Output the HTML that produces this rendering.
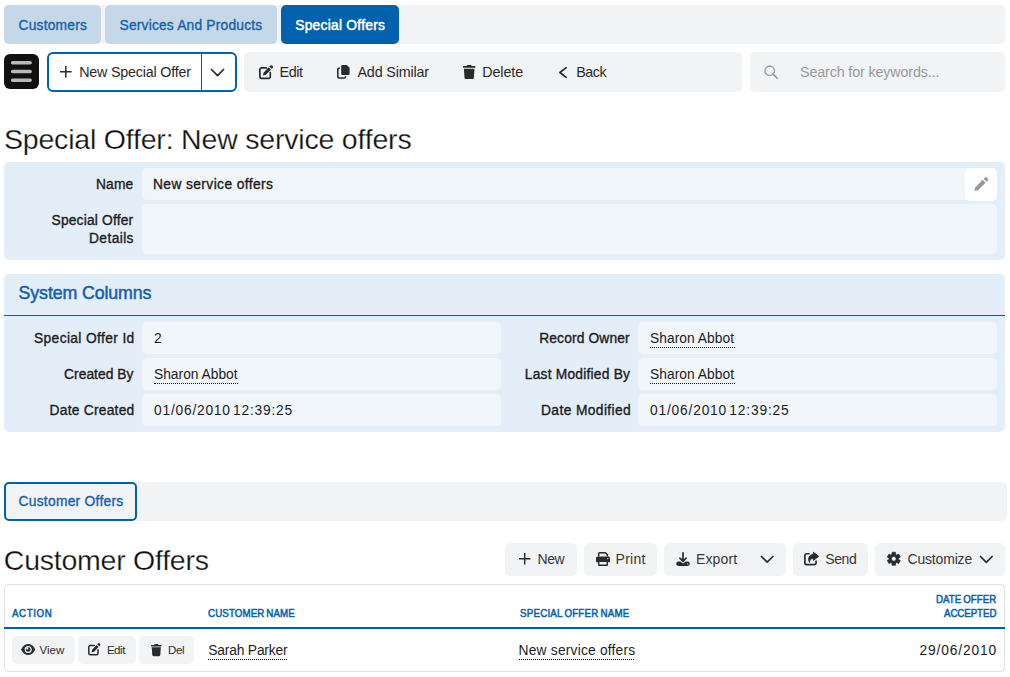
<!DOCTYPE html>
<html lang="en"><head><meta charset="utf-8"><title>Special Offer: New service offers</title>
<style>
html,body{margin:0;padding:0;background:#fff;}
body{width:1010px;height:677px;position:relative;overflow:hidden;font-family:"Liberation Sans", sans-serif;}
.b{position:absolute;}
.t{position:absolute;white-space:pre;margin:0;padding:0;text-decoration:none;display:block;}
svg{position:absolute;overflow:visible;}
</style></head><body>
<nav class="tabs">
<div class="b" style="left:4px;top:5px;width:1001px;height:39px;background:#f2f3f5;border-radius:5px;"></div>
<div class="b" style="left:4px;top:5px;width:97px;height:39px;background:#c5d8e8;border-radius:5px;"></div>
<div class="b" style="left:105px;top:5px;width:172px;height:39px;background:#c5d8e8;border-radius:5px;"></div>
<div class="b" style="left:281px;top:5px;width:118px;height:39px;background:#0061ae;border-radius:5px;"></div>
<a class="t" style="left:18.5px;top:18px;font-size:13.8px;line-height:15px;font-weight:400;color:#1660ad;letter-spacing:0.212px;-webkit-text-stroke:0.35px currentColor;">Customers</a>
<a class="t" style="left:119.5px;top:18px;font-size:13.8px;line-height:15px;font-weight:400;color:#1660ad;letter-spacing:0.192px;-webkit-text-stroke:0.35px currentColor;">Services And Products</a>
<a class="t" style="left:295.2px;top:18px;font-size:13.8px;line-height:15px;font-weight:400;color:#ffffff;letter-spacing:0.262px;-webkit-text-stroke:0.5px currentColor;">Special Offers</a>
</nav>
<div class="toolbar">
<div class="b" style="left:4px;top:54px;width:35px;height:35px;background:#111111;border-radius:6px;"></div>
<svg style="left:4px;top:54px" width="35" height="35" viewBox="0 0 35 35"><path d="M8.6 8.8H26.2M8.6 17.5H26.2M8.6 26.3H26.2" stroke="#b9b9b9" stroke-width="3.4" stroke-linecap="round" fill="none"/></svg>
<div class="b" style="left:47px;top:52px;width:190px;height:40px;background:#ffffff;border-radius:6px;border:2px solid #0061ae;box-sizing:border-box;"></div>
<div class="b" style="left:201px;top:54px;width:1px;height:36px;background:#0061ae;"></div>
<svg style="left:60.2px;top:66.2px" width="11.6" height="11.6" viewBox="0 0 11.6 11.6"><path d="M5.8 0V11.6M0 5.8H11.6" stroke="#2b2b2b" stroke-width="1.5" fill="none"/></svg>
<svg style="left:210.9px;top:68.86300000000001px" width="13.099999999999994" height="7.073999999999997" viewBox="0 0 13.099999999999994 7.073999999999997"><path d="M0.5 0.5L6.549999999999997 6.573999999999997L12.599999999999994 0.5" stroke="#2b2b2b" stroke-width="1.7" fill="none" stroke-linecap="round" stroke-linejoin="round"/></svg>
<div class="b" style="left:244px;top:52px;width:498px;height:40px;background:#f2f3f5;border-radius:5px;"></div>
<svg style="left:259.3px;top:64.6px" width="14" height="14" viewBox="0 0 14 14"><g transform="scale(1.0)"><path d="M7.2 2.9H2.6A1.7 1.7 0 0 0 0.9 4.6V11.6A1.7 1.7 0 0 0 2.6 13.3H9.6A1.7 1.7 0 0 0 11.3 11.6V7.6" stroke="#2b2b2b" stroke-width="1.7" fill="none" stroke-linecap="round"/><path d="M11.3 0.6a1.3 1.3 0 0 1 1.85 0l0.5 0.5a1.3 1.3 0 0 1 0 1.85l-0.9 0.9-2.35-2.35zM9.6 2.3l2.35 2.35-5.1 5.1-2.9 0.75 0.75-2.9z" fill="#2b2b2b"/></g></svg>
<svg style="left:337.4px;top:64.8px" width="12.8" height="13.6" viewBox="0 0 12.8 13.6"><g transform="scale(1.0,0.9927007299270073) translate(-0.2,-0.3)"><path d="M5.6 0.3H10l2.8 2.8V9.2a1.2 1.2 0 0 1-1.2 1.2H5.6A1.2 1.2 0 0 1 4.4 9.2V1.5A1.2 1.2 0 0 1 5.6 0.3z" fill="#2b2b2b"/><path d="M3 3.6H2.2A1.2 1.2 0 0 0 1 4.8v7.4a1.2 1.2 0 0 0 1.2 1.2h5.2a1.2 1.2 0 0 0 1.2-1.2v-0.6" stroke="#2b2b2b" stroke-width="1.6" fill="none"/></g></svg>
<svg style="left:462.9px;top:64.8px" width="12.4" height="14" viewBox="0 0 12.4 14"><g transform="scale(1.0,1.0)"><path d="M4.3 0h3.8l0.7 1.1h3a0.6 0.6 0 0 1 0.6 0.6v0.5a0.6 0.6 0 0 1-0.6 0.6H0.6A0.6 0.6 0 0 1 0 2.2V1.7a0.6 0.6 0 0 1 0.6-0.6h3z" fill="#2b2b2b"/><path d="M0.9 3.7h10.6l-0.6 9a1.4 1.4 0 0 1-1.4 1.3H2.9a1.4 1.4 0 0 1-1.4-1.3z" fill="#2b2b2b"/></g></svg>
<svg style="left:558.8px;top:66.76999999999994px" width="7.900000000000091" height="11.060000000000127" viewBox="0 0 7.900000000000091 11.060000000000127"><path d="M7.200000000000091 0.7L0.9 5.530000000000063L7.200000000000091 10.360000000000127" stroke="#2b2b2b" stroke-width="1.7" fill="none" stroke-linecap="round" stroke-linejoin="round"/></svg>
<div class="b" style="left:750px;top:52px;width:255px;height:40px;background:#f2f3f5;border-radius:5px;"></div>
<svg style="left:763.8px;top:64.8px" width="14" height="14" viewBox="0 0 14 14"><g transform="scale(1.0)"><circle cx="5.7" cy="5.7" r="4.7" stroke="#9b9ba0" stroke-width="1.35" fill="none"/><path d="M9.1 9.1L13.3 13.3" stroke="#9b9ba0" stroke-width="1.6" stroke-linecap="round"/></g></svg>
<a class="t" style="left:79.2px;top:64px;font-size:14.3px;line-height:16px;font-weight:400;color:#2a2a2a;letter-spacing:-0.193px;">New Special Offer</a>
<a class="t" style="left:279.5px;top:64px;font-size:14.3px;line-height:16px;font-weight:400;color:#2a2a2a;letter-spacing:-0.388px;">Edit</a>
<a class="t" style="left:357.5px;top:64px;font-size:14.3px;line-height:16px;font-weight:400;color:#2a2a2a;letter-spacing:-0.164px;">Add Similar</a>
<a class="t" style="left:482.2px;top:64px;font-size:14.3px;line-height:16px;font-weight:400;color:#2a2a2a;letter-spacing:-0.075px;">Delete</a>
<a class="t" style="left:576.2px;top:64px;font-size:14.3px;line-height:16px;font-weight:400;color:#2a2a2a;letter-spacing:-0.479px;">Back</a>
<span class="t" style="left:800px;top:64px;font-size:14.3px;line-height:16px;font-weight:400;color:#9a9a9a;letter-spacing:-0.131px;">Search for keywords...</span>
</div>
<header class="title">
<h1 class="t thin" style="left:4px;top:123px;font-size:28.5px;line-height:32px;font-weight:400;color:#101010;letter-spacing:-0.197px;-webkit-text-stroke:0.25px #fff;">Special Offer: New service offers</h1>
</header>
<section class="panel">
<div class="b" style="left:4px;top:162px;width:1001px;height:98px;background:#e4eef8;border-radius:5px;"></div>
<div class="b" style="left:142px;top:168px;width:855px;height:32px;background:#f1f6fb;border-radius:5px;"></div>
<div class="b" style="left:142px;top:204px;width:855px;height:50px;background:#f1f6fb;border-radius:5px;"></div>
<div class="b" style="left:965px;top:168px;width:32px;height:33px;background:#ffffff;border-radius:5px;"></div>
<svg style="left:973.8px;top:176.6px" width="14.4" height="14.4" viewBox="0 0 14.4 14.4"><g transform="scale(1.0285714285714287)"><path d="M10.6 0.6a1.4 1.4 0 0 1 2 0l0.8 0.8a1.4 1.4 0 0 1 0 2l-1.2 1.2-2.8-2.8zM8.5 2.7l2.8 2.8-7.4 7.4-3.6 0.8 0.8-3.6z" fill="#999999"/></g></svg>
<label class="t" style="left:96px;top:177px;font-size:13.8px;line-height:15px;font-weight:400;color:#1c1c1c;letter-spacing:0.157px;-webkit-text-stroke:0.35px currentColor;">Name</label>
<span class="t" style="left:153px;top:177px;font-size:13.8px;line-height:15px;font-weight:400;color:#1c1c1c;letter-spacing:0.393px;-webkit-text-stroke:0.35px currentColor;">New service offers</span>
<label class="t" style="left:51.5px;top:213px;font-size:13.8px;line-height:15px;font-weight:400;color:#1c1c1c;letter-spacing:0.183px;-webkit-text-stroke:0.35px currentColor;">Special Offer</label>
<label class="t" style="left:89px;top:231px;font-size:13.8px;line-height:15px;font-weight:400;color:#1c1c1c;letter-spacing:0.388px;-webkit-text-stroke:0.35px currentColor;">Details</label>
</section>
<section class="panel system">
<div class="b" style="left:4px;top:274px;width:1001px;height:158px;background:#e4eef8;border-radius:5px;"></div>
<div class="b" style="left:4px;top:315px;width:1001px;height:1px;background:#0061ae;"></div>
<div class="b" style="left:142px;top:322px;width:359px;height:32px;background:#f1f6fb;border-radius:5px;"></div>
<div class="b" style="left:638px;top:322px;width:359px;height:32px;background:#f1f6fb;border-radius:5px;"></div>
<div class="b" style="left:142px;top:358px;width:359px;height:32px;background:#f1f6fb;border-radius:5px;"></div>
<div class="b" style="left:638px;top:358px;width:359px;height:32px;background:#f1f6fb;border-radius:5px;"></div>
<div class="b" style="left:142px;top:394px;width:359px;height:32px;background:#f1f6fb;border-radius:5px;"></div>
<div class="b" style="left:638px;top:394px;width:359px;height:32px;background:#f1f6fb;border-radius:5px;"></div>
<div class="b" style="left:153.5px;top:383px;width:84.80000000000001px;height:0;border-top:1px dotted #161616"></div>
<div class="b" style="left:650px;top:347px;width:84.79999999999995px;height:0;border-top:1px dotted #161616"></div>
<div class="b" style="left:650px;top:383px;width:84.79999999999995px;height:0;border-top:1px dotted #161616"></div>
<h3 class="t" style="left:18.6px;top:283px;font-size:17.8px;line-height:20px;font-weight:400;color:#1660ad;letter-spacing:-0.115px;-webkit-text-stroke:0.5px currentColor;">System Columns</h3>
<label class="t" style="left:34px;top:331px;font-size:13.8px;line-height:15px;font-weight:400;color:#1c1c1c;letter-spacing:0.362px;-webkit-text-stroke:0.35px currentColor;">Special Offer Id</label>
<span class="t" style="left:154px;top:331px;font-size:13.8px;line-height:15px;font-weight:400;color:#1c1c1c;letter-spacing:0px;">2</span>
<label class="t" style="left:64px;top:367px;font-size:13.8px;line-height:15px;font-weight:400;color:#1c1c1c;letter-spacing:0.053px;-webkit-text-stroke:0.35px currentColor;">Created By</label>
<a class="t" style="left:154px;top:367px;font-size:13.8px;line-height:15px;font-weight:400;color:#1c1c1c;letter-spacing:-0.004px;">Sharon Abbot</a>
<label class="t" style="left:49.5px;top:403px;font-size:13.8px;line-height:15px;font-weight:400;color:#1c1c1c;letter-spacing:0.247px;-webkit-text-stroke:0.35px currentColor;">Date Created</label>
<span class="t" style="left:154px;top:403px;font-size:13.8px;line-height:15px;font-weight:400;color:#1c1c1c;letter-spacing:0.771px;word-spacing:-2.3px;">01/06/2010 12:39:25</span>
<label class="t" style="left:539.2px;top:331px;font-size:13.8px;line-height:15px;font-weight:400;color:#1c1c1c;letter-spacing:0.141px;-webkit-text-stroke:0.35px currentColor;">Record Owner</label>
<a class="t" style="left:650px;top:331px;font-size:13.8px;line-height:15px;font-weight:400;color:#1c1c1c;letter-spacing:0.041px;">Sharon Abbot</a>
<label class="t" style="left:524.8px;top:367px;font-size:13.8px;line-height:15px;font-weight:400;color:#1c1c1c;letter-spacing:0.214px;-webkit-text-stroke:0.35px currentColor;">Last Modified By</label>
<a class="t" style="left:650px;top:367px;font-size:13.8px;line-height:15px;font-weight:400;color:#1c1c1c;letter-spacing:0.041px;">Sharon Abbot</a>
<label class="t" style="left:541px;top:403px;font-size:13.8px;line-height:15px;font-weight:400;color:#1c1c1c;letter-spacing:0.387px;-webkit-text-stroke:0.35px currentColor;">Date Modified</label>
<span class="t" style="left:650px;top:403px;font-size:13.8px;line-height:15px;font-weight:400;color:#1c1c1c;letter-spacing:0.799px;word-spacing:-2.3px;">01/06/2010 12:39:25</span>
</section>
<nav class="subtabs">
<div class="b" style="left:4px;top:482px;width:1003px;height:39px;background:#f2f3f5;border-radius:5px;"></div>
<div class="b" style="left:4px;top:482px;width:133px;height:39px;background:#f2f3f5;border-radius:5px;border:2px solid #0061ae;box-sizing:border-box;"></div>
<a class="t" style="left:18.5px;top:494px;font-size:13.8px;line-height:15px;font-weight:400;color:#1660ad;letter-spacing:0.268px;-webkit-text-stroke:0.35px currentColor;">Customer Offers</a>
</nav>
<div class="list-head">
<div class="b" style="left:505px;top:543px;width:72px;height:33px;background:#f2f3f5;border-radius:5px;"></div>
<div class="b" style="left:584px;top:543px;width:73px;height:33px;background:#f2f3f5;border-radius:5px;"></div>
<div class="b" style="left:664px;top:543px;width:122px;height:33px;background:#f2f3f5;border-radius:5px;"></div>
<div class="b" style="left:793px;top:543px;width:75px;height:33px;background:#f2f3f5;border-radius:5px;"></div>
<div class="b" style="left:875px;top:543px;width:130px;height:33px;background:#f2f3f5;border-radius:5px;"></div>
<svg style="left:518.5px;top:553.3px" width="11.4" height="11.4" viewBox="0 0 11.4 11.4"><path d="M5.7 0V11.4M0 5.7H11.4" stroke="#2b2b2b" stroke-width="1.5" fill="none"/></svg>
<svg style="left:595.9px;top:551.9px" width="14.0" height="14.0" viewBox="0 0 14.0 14.0"><g transform="scale(1.0)"><path d="M2.7 4.6V1.6A0.9 0.9 0 0 1 3.6 0.700H9.4L11.3 2.500V4.600" stroke="#2b2b2b" stroke-width="1.5" fill="none" stroke-linejoin="round"/><path d="M1.5 4.5h11A1.5 1.5 0 0 1 14 6v3.6a0.700 0.700 0 0 1-0.700 0.700H0.700A0.700 0.700 0 0 1 0 9.600V6A1.500 1.500 0 0 1 1.500 4.500z" fill="#2b2b2b"/><path d="M2.7 9.3h8.600v3.400a0.600 0.600 0 0 1-0.600 0.600H3.300a0.600 0.600 0 0 1-0.600-0.600z" stroke="#2b2b2b" stroke-width="1.5" fill="#f2f3f5"/><circle cx="11.8" cy="6.6" r="0.7" fill="#f2f3f5"/></g></svg>
<svg style="left:676px;top:552px" width="14" height="14" viewBox="0 0 14 14"><g transform="scale(1.0)"><rect x="0.2" y="9.600" width="13.600" height="4.300" rx="2.100" fill="#2b2b2b"/><path d="M7 0.900V9.100M3.900 6.100L7 9.300L10.100 6.100" stroke="#f2f3f5" stroke-width="3.800" fill="none" stroke-linecap="round" stroke-linejoin="round"/><path d="M7 0.900V9.100M3.900 6.100L7 9.300L10.100 6.100" stroke="#2b2b2b" stroke-width="1.700" fill="none" stroke-linecap="round" stroke-linejoin="round"/><circle cx="11.700" cy="11.800" r="0.650" fill="#f2f3f5"/></g></svg>
<svg style="left:760.8px;top:556.1519999999999px" width="12.400000000000091" height="6.6960000000000495" viewBox="0 0 12.400000000000091 6.6960000000000495"><path d="M0.5 0.5L6.2000000000000455 6.1960000000000495L11.900000000000091 0.5" stroke="#2b2b2b" stroke-width="1.7" fill="none" stroke-linecap="round" stroke-linejoin="round"/></svg>
<svg style="left:804.3px;top:551.9px" width="15.0" height="13.4" viewBox="0 0 15.0 13.4"><path d="M5 1.75H2.5A1.65 1.65 0 0 0 0.85 3.4v7.5a1.65 1.65 0 0 0 1.65 1.65h7.9a1.65 1.65 0 0 0 1.65-1.65V9.2" stroke="#2b2b2b" stroke-width="1.7" fill="none" stroke-linecap="round"/><path d="M9.3 0.2L14.8 4.3L9.3 8.4V6.2C7.2 6.2 5.9 7.3 5.5 10.4C3.4 6.600 5.2 2.600 9.3 2.400z" fill="#2b2b2b" stroke="#2b2b2b" stroke-width="0.9" stroke-linejoin="round"/></svg>
<svg style="left:887px;top:552px" width="13.6" height="13.6" viewBox="0 0 13.6 13.6"><g transform="scale(0.9714285714285714)"><path d="M5.09 2.49L5.13 0.25L8.87 0.25L8.91 2.49L9.95 3.09L11.91 2.01L13.78 5.24L11.86 6.40L11.86 7.60L13.78 8.76L11.91 11.99L9.95 10.91L8.91 11.51L8.87 13.75L5.13 13.75L5.09 11.51L4.05 10.91L2.09 11.99L0.22 8.76L2.14 7.60L2.14 6.40L0.22 5.24L2.09 2.01L4.05 3.09Z M7 4.6a2.4 2.4 0 1 0 0 4.8a2.4 2.4 0 1 0 0-4.8z" fill="#2b2b2b" fill-rule="evenodd" stroke="#2b2b2b" stroke-width="0.6" stroke-linejoin="round"/></g></svg>
<svg style="left:979.9px;top:556.098px" width="12.600000000000023" height="6.804000000000013" viewBox="0 0 12.600000000000023 6.804000000000013"><path d="M0.5 0.5L6.300000000000011 6.304000000000013L12.100000000000023 0.5" stroke="#2b2b2b" stroke-width="1.7" fill="none" stroke-linecap="round" stroke-linejoin="round"/></svg>
<h2 class="t thin" style="left:3.8px;top:544px;font-size:28.5px;line-height:32px;font-weight:400;color:#101010;letter-spacing:-0.242px;-webkit-text-stroke:0.25px #fff;">Customer Offers</h2>
<a class="t" style="left:537.6px;top:551px;font-size:14px;line-height:16px;font-weight:400;color:#383838;letter-spacing:-0.448px;">New</a>
<a class="t" style="left:615.6px;top:551px;font-size:14px;line-height:16px;font-weight:400;color:#383838;letter-spacing:0.226px;">Print</a>
<a class="t" style="left:695.9px;top:551px;font-size:14px;line-height:16px;font-weight:400;color:#383838;letter-spacing:0.166px;">Export</a>
<a class="t" style="left:825.2px;top:551px;font-size:14px;line-height:16px;font-weight:400;color:#383838;letter-spacing:-0.37px;">Send</a>
<a class="t" style="left:907.5px;top:551px;font-size:14px;line-height:16px;font-weight:400;color:#383838;letter-spacing:-0.181px;">Customize</a>
</div>
<div class="grid">
<div class="b" style="left:4px;top:584px;width:1001px;height:88px;background:#ffffff;border-radius:4px;border:1px solid #e0e0e0;box-sizing:border-box;"></div>
<div class="b" style="left:4px;top:627px;width:1001px;height:2px;background:#0061ae;"></div>
<div class="b" style="left:12px;top:636px;width:63px;height:28px;background:#f2f3f5;border-radius:5px;"></div>
<div class="b" style="left:78px;top:636px;width:58px;height:28px;background:#f2f3f5;border-radius:5px;"></div>
<div class="b" style="left:139px;top:636px;width:55px;height:28px;background:#f2f3f5;border-radius:5px;"></div>
<svg style="left:21.0px;top:643.8px" width="14.4" height="11" viewBox="0 0 14.4 11"><g transform="scale(1.0,1.0)"><path d="M0 5.5C2 1.6 4.5 0 7.2 0S12.4 1.6 14.4 5.5C12.4 9.4 9.9 11 7.2 11S2 9.4 0 5.5z" fill="#2b2b2b"/><circle cx="7.2" cy="5.5" r="3.55" fill="#f2f3f5"/><circle cx="7.2" cy="5.5" r="2.35" fill="#2b2b2b"/><circle cx="6.3" cy="4.6" r="1.05" fill="#f2f3f5"/></g></svg>
<svg style="left:88.2px;top:643.3px" width="12.4" height="12.4" viewBox="0 0 12.4 12.4"><g transform="scale(0.8857142857142858)"><path d="M7.2 2.9H2.6A1.7 1.7 0 0 0 0.9 4.6V11.6A1.7 1.7 0 0 0 2.6 13.3H9.6A1.7 1.7 0 0 0 11.3 11.6V7.6" stroke="#2b2b2b" stroke-width="1.7" fill="none" stroke-linecap="round"/><path d="M11.3 0.6a1.3 1.3 0 0 1 1.85 0l0.5 0.5a1.3 1.3 0 0 1 0 1.85l-0.9 0.9-2.35-2.35zM9.6 2.3l2.35 2.35-5.1 5.1-2.9 0.75 0.75-2.9z" fill="#2b2b2b"/></g></svg>
<svg style="left:150.6px;top:643.8px" width="10.6" height="12.2" viewBox="0 0 10.6 12.2"><g transform="scale(0.8548387096774193,0.8714285714285713)"><path d="M4.3 0h3.8l0.7 1.1h3a0.6 0.6 0 0 1 0.6 0.6v0.5a0.6 0.6 0 0 1-0.6 0.6H0.6A0.6 0.6 0 0 1 0 2.2V1.7a0.6 0.6 0 0 1 0.6-0.6h3z" fill="#2b2b2b"/><path d="M0.9 3.7h10.6l-0.6 9a1.4 1.4 0 0 1-1.4 1.3H2.9a1.4 1.4 0 0 1-1.4-1.3z" fill="#2b2b2b"/></g></svg>
<div class="b" style="left:208px;top:659px;width:79.39999999999998px;height:0;border-top:1px dotted #161616"></div>
<div class="b" style="left:519.3px;top:659px;width:115.0px;height:0;border-top:1px dotted #161616"></div>
<span class="t" style="left:12px;top:607px;font-size:10.8px;line-height:12px;font-weight:400;color:#0061ae;letter-spacing:0.668px;-webkit-text-stroke:0.5px currentColor;transform:scaleX(0.9);transform-origin:0 0;">ACTION</span>
<span class="t" style="left:208px;top:607px;font-size:10.8px;line-height:12px;font-weight:400;color:#0061ae;letter-spacing:0.137px;word-spacing:-1px;-webkit-text-stroke:0.5px currentColor;transform:scaleX(0.9);transform-origin:0 0;">CUSTOMER NAME</span>
<span class="t" style="left:520px;top:607px;font-size:10.8px;line-height:12px;font-weight:400;color:#0061ae;letter-spacing:0.264px;word-spacing:-1px;-webkit-text-stroke:0.5px currentColor;transform:scaleX(0.9);transform-origin:0 0;">SPECIAL OFFER NAME</span>
<span class="t" style="left:936.4px;top:593px;font-size:10.8px;line-height:12px;font-weight:400;color:#0061ae;letter-spacing:0.049px;word-spacing:-1px;-webkit-text-stroke:0.5px currentColor;transform:scaleX(0.9);transform-origin:0 0;">DATE OFFER</span>
<span class="t" style="left:944.3px;top:607px;font-size:10.8px;line-height:12px;font-weight:400;color:#0061ae;letter-spacing:-0.079px;-webkit-text-stroke:0.5px currentColor;transform:scaleX(0.9);transform-origin:0 0;">ACCEPTED</span>
<a class="t" style="left:39.4px;top:644px;font-size:11.5px;line-height:12px;font-weight:400;color:#2b2b2b;letter-spacing:0.062px;">View</a>
<a class="t" style="left:106.9px;top:644px;font-size:11.5px;line-height:12px;font-weight:400;color:#2b2b2b;letter-spacing:-0.44px;">Edit</a>
<a class="t" style="left:168.1px;top:644px;font-size:11.5px;line-height:12px;font-weight:400;color:#2b2b2b;letter-spacing:-0.35px;">Del</a>
<a class="t" style="left:208.3px;top:643px;font-size:13.8px;line-height:15px;font-weight:400;color:#1c1c1c;letter-spacing:-0.181px;">Sarah Parker</a>
<a class="t" style="left:518.6px;top:643px;font-size:13.8px;line-height:15px;font-weight:400;color:#1c1c1c;letter-spacing:0.193px;">New service offers</a>
<span class="t" style="left:919.6px;top:643px;font-size:13.8px;line-height:15px;font-weight:400;color:#1c1c1c;letter-spacing:0.825px;">29/06/2010</span>
</div>
</body></html>
